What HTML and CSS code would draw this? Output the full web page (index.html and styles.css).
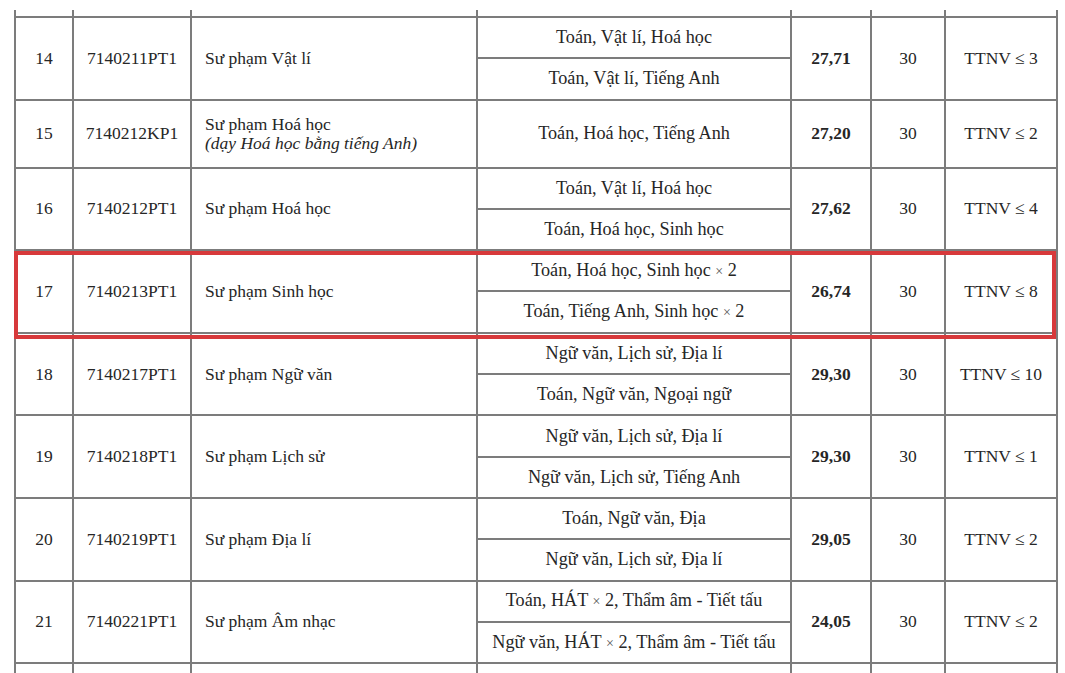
FILE: index.html
```html
<!DOCTYPE html>
<html lang="vi">
<head>
<meta charset="utf-8">
<title>Điểm chuẩn</title>
<link rel="stylesheet" href="styles.css">
</head>
<body>
<div class="sheet">
  <table class="scores">
    <colgroup>
      <col class="c-stt"><col class="c-code"><col class="c-name"><col class="c-combo"><col class="c-score"><col class="c-quota"><col class="c-cond">
    </colgroup>
    <tbody>
      <tr class="stub"><td></td><td></td><td></td><td></td><td></td><td></td><td></td></tr>

      <tr class="sub"><td rowspan="2">14</td><td rowspan="2">7140211PT1</td><td rowspan="2" class="name">Sư phạm Vật lí</td><td class="combo">Toán, Vật lí, Hoá học</td><td rowspan="2" class="score">27,71</td><td rowspan="2">30</td><td rowspan="2">TTNV ≤ 3</td></tr>
      <tr class="sub"><td class="combo">Toán, Vật lí, Tiếng Anh</td></tr>

      <tr class="single"><td>15</td><td>7140212KP1</td><td class="name">Sư phạm Hoá học<br><i>(dạy Hoá học bằng tiếng Anh)</i></td><td class="combo">Toán, Hoá học, Tiếng Anh</td><td class="score">27,20</td><td>30</td><td>TTNV ≤ 2</td></tr>

      <tr class="sub"><td rowspan="2">16</td><td rowspan="2">7140212PT1</td><td rowspan="2" class="name">Sư phạm Hoá học</td><td class="combo">Toán, Vật lí, Hoá học</td><td rowspan="2" class="score">27,62</td><td rowspan="2">30</td><td rowspan="2">TTNV ≤ 4</td></tr>
      <tr class="sub"><td class="combo">Toán, Hoá học, Sinh học</td></tr>

      <tr class="sub"><td rowspan="2">17</td><td rowspan="2">7140213PT1</td><td rowspan="2" class="name">Sư phạm Sinh học</td><td class="combo">Toán, Hoá học, Sinh học <span class="x">×</span> 2</td><td rowspan="2" class="score">26,74</td><td rowspan="2">30</td><td rowspan="2">TTNV ≤ 8</td></tr>
      <tr class="sub"><td class="combo">Toán, Tiếng Anh, Sinh học <span class="x">×</span> 2</td></tr>

      <tr class="sub"><td rowspan="2">18</td><td rowspan="2">7140217PT1</td><td rowspan="2" class="name">Sư phạm Ngữ văn</td><td class="combo">Ngữ văn, Lịch sử, Địa lí</td><td rowspan="2" class="score">29,30</td><td rowspan="2">30</td><td rowspan="2">TTNV ≤ 10</td></tr>
      <tr class="sub"><td class="combo">Toán, Ngữ văn, Ngoại ngữ</td></tr>

      <tr class="sub"><td rowspan="2">19</td><td rowspan="2">7140218PT1</td><td rowspan="2" class="name">Sư phạm Lịch sử</td><td class="combo">Ngữ văn, Lịch sử, Địa lí</td><td rowspan="2" class="score">29,30</td><td rowspan="2">30</td><td rowspan="2">TTNV ≤ 1</td></tr>
      <tr class="sub"><td class="combo">Ngữ văn, Lịch sử, Tiếng Anh</td></tr>

      <tr class="sub"><td rowspan="2">20</td><td rowspan="2">7140219PT1</td><td rowspan="2" class="name">Sư phạm Địa lí</td><td class="combo">Toán, Ngữ văn, Địa</td><td rowspan="2" class="score">29,05</td><td rowspan="2">30</td><td rowspan="2">TTNV ≤ 2</td></tr>
      <tr class="sub"><td class="combo">Ngữ văn, Lịch sử, Địa lí</td></tr>

      <tr class="sub"><td rowspan="2">21</td><td rowspan="2">7140221PT1</td><td rowspan="2" class="name">Sư phạm Âm nhạc</td><td class="combo">Toán, HÁT <span class="x">×</span> 2, Thẩm âm - Tiết tấu</td><td rowspan="2" class="score">24,05</td><td rowspan="2">30</td><td rowspan="2">TTNV ≤ 2</td></tr>
      <tr class="sub"><td class="combo">Ngữ văn, HÁT <span class="x">×</span> 2, Thẩm âm - Tiết tấu</td></tr>

      <tr class="sub"><td></td><td></td><td></td><td></td><td></td><td></td><td></td></tr>
    </tbody>
  </table>
  <div class="highlight"></div>
</div>
</body>
</html>
```

FILE: styles.css
```css
html, body {
  margin: 0;
  padding: 0;
  background: #ffffff;
  overflow: hidden;
}

.sheet {
  position: relative;
  padding: 10px 0 0 14px;
  height: 663px;
  overflow: hidden;
}

.scores {
  border-collapse: collapse;
  table-layout: fixed;
  width: 1042px;
  font-family: "Liberation Serif", "Times New Roman", serif;
  font-size: 17.5px;
  color: #262626;
}

.c-stt { width: 58px; }
.c-code { width: 118px; }
.c-name { width: 286px; }
.c-combo { width: 314px; }
.c-score { width: 80px; }
.c-quota { width: 74px; }
.c-cond { width: 112px; }

.scores td {
  border: 2px solid #7c7c7c;
  padding: 0 2px;
  text-align: center;
  vertical-align: middle;
  line-height: 19px;
  white-space: nowrap;
}

.scores tr.stub td {
  border-top: none;
  height: 6px;
  padding: 0;
}

.scores tr.sub td {
  height: 41.3px;
  box-sizing: border-box;
}

.scores tr.single td {
  height: 66px;
}

.scores td.name {
  text-align: left;
  padding-left: 13px;
}

.scores td.combo {
  font-size: 18.2px;
}

.scores td.score {
  font-weight: bold;
}

.x {
  font-size: 14px;
  color: #555;
}

.highlight {
  position: absolute;
  left: 14px;
  top: 251px;
  width: 1034px;
  height: 80px;
  border: 4px solid #d7393b;
  pointer-events: none;
}
```
